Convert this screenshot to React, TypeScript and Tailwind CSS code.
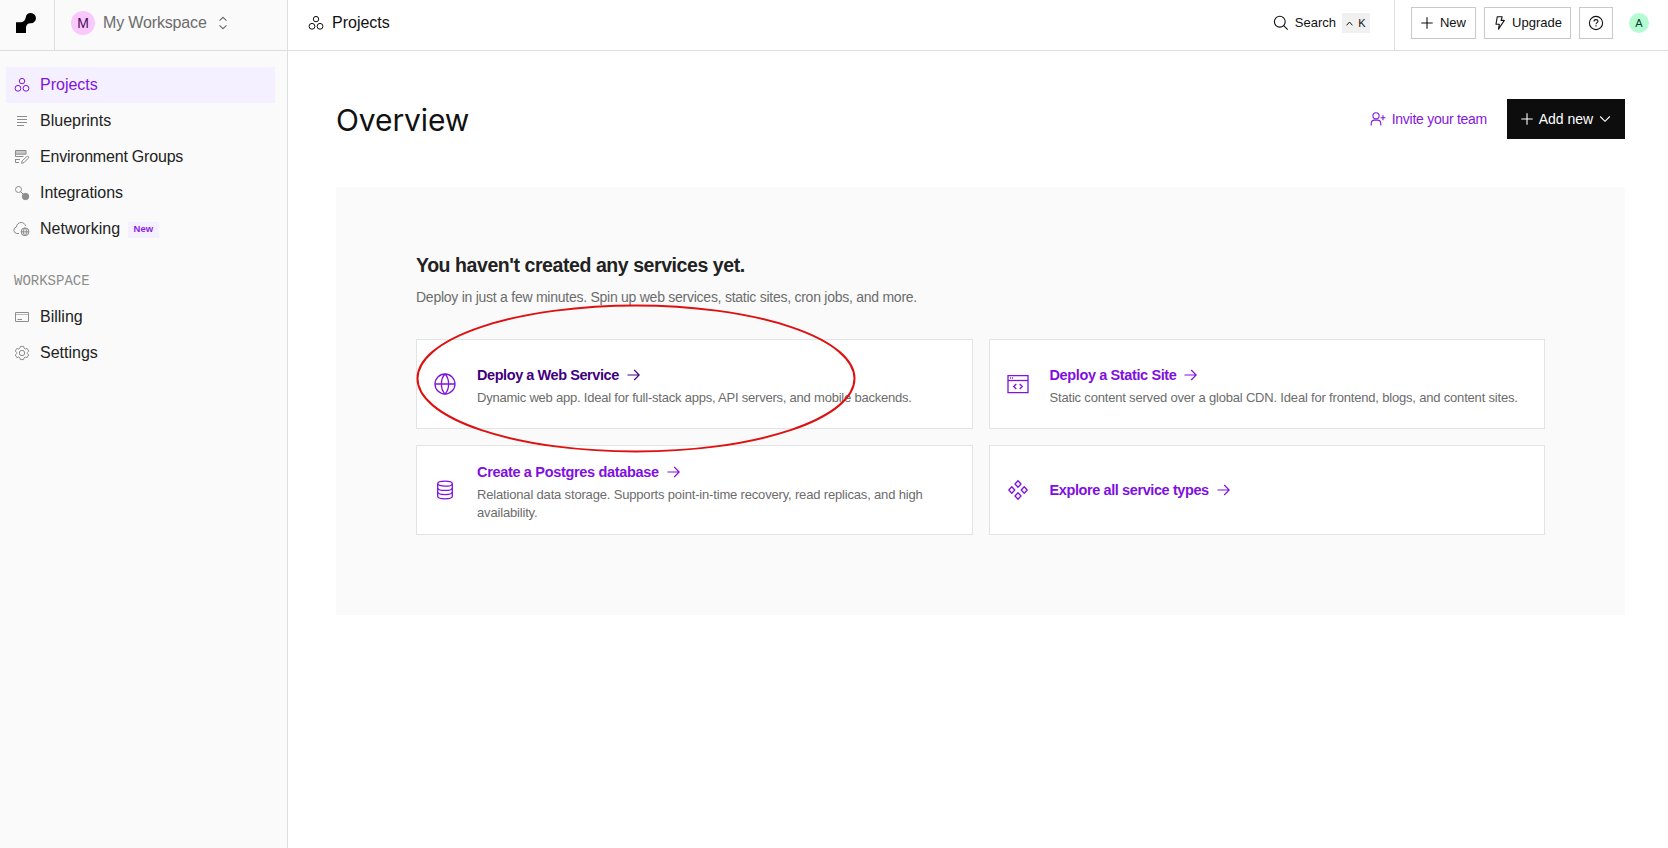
import React from "react";

type P = { className?: string };

const Rings = ({ className = "" }: P) => (
  <svg width="16" height="16" viewBox="0 0 16 16" fill="none" stroke="currentColor" strokeWidth="1" className={className}>
    <circle cx="8" cy="4.1" r="2.7" />
    <circle cx="4" cy="11.3" r="2.9" />
    <circle cx="12" cy="11.3" r="2.9" />
  </svg>
);

const Lines = () => (
  <svg width="16" height="16" viewBox="0 0 16 16" fill="none" stroke="currentColor" strokeWidth="1">
    <path d="M3 3.5h10M3 6.5h10M3 9.5h10M3 12.5h7" />
  </svg>
);

const EnvGroups = () => (
  <svg width="16" height="16" viewBox="0 0 16 16" fill="none" stroke="currentColor" strokeWidth="1">
    <path d="M1.5 1.5h10.5v3.700h-10.500z" fill="currentColor" fillOpacity="0.45" />
    <path d="M1.500 5v2.500h8M1 10.500h5M1.500 10.500v3h3.500" />
    <path d="M7.6 14.4l.6-2.6 4.6-4.3c1.1-.8 2.4.5 1.6 1.6L10 13.6z" />
  </svg>
);

const Integrations = () => (
  <svg width="16" height="16" viewBox="0 0 16 16" fill="none" stroke="currentColor" strokeWidth="1">
    <circle cx="4.5" cy="4.5" r="3" />
    <path d="M6.7 6.7l2.5 2.5" />
    <circle cx="11.5" cy="11.5" r="3.2" fill="currentColor" />
  </svg>
);

const CloudGlobe = () => (
  <svg width="17" height="16" viewBox="0 0 17 16" fill="none" stroke="currentColor" strokeWidth="1" className="-ml-px">
    <path d="M6 12.5H3.8A3.3 3.3 0 0 1 3.4 6C3.6 3.2 5.800 1.500 8.200 1.500c2.200 0 4 1.400 4.400 3.600" />
    <circle cx="12" cy="10.800" r="3.900" fill="currentColor" fillOpacity="0.15" />
    <path d="M8.100 10.800h7.800M12 6.900c-2.200 2.200-2.200 5.600 0 7.800M12 6.900c2.200 2.200 2.200 5.600 0 7.800" />
  </svg>
);

const Card = () => (
  <svg width="16" height="16" viewBox="0 0 16 16" fill="none" stroke="currentColor" strokeWidth="1">
    <path d="M1.500 3.500h13v9h-13z" />
    <path d="M2 5.500h12" strokeOpacity="0.6" />
    <path d="M3.500 10.500h4.500" />
  </svg>
);

const Gear = () => (
  <svg width="16" height="16" viewBox="0 0 16 16" fill="none" stroke="currentColor" strokeWidth="1" strokeLinejoin="round">
    <path d="M6.400 1.400h3.200l.5 1.800 1.200.7 1.800-.5 1.600 2.700-1.300 1.300v1.200l1.300 1.300-1.600 2.700-1.800-.5-1.200.7-.5 1.800H6.400l-.5-1.800-1.200-.7-1.800.5-1.600-2.700 1.300-1.300V7.400L1.300 6.100l1.600-2.700 1.800.5 1.200-.7z" />
    <circle cx="8" cy="8" r="2.700" />
  </svg>
);

const UpDown = () => (
  <svg width="10" height="14" viewBox="0 0 10 14" fill="none" stroke="currentColor" strokeWidth="1.100">
    <path d="M1.500 4.700L5 1.300l3.500 3.400M1.500 9.300L5 12.700l3.500-3.400" />
  </svg>
);

const Plus = () => (
  <svg width="12" height="12" viewBox="0 0 12 12" fill="none" stroke="currentColor" strokeWidth="1.100">
    <path d="M6 .3v11.400M.3 6h11.400" />
  </svg>
);

const Bolt = () => (
  <svg width="10" height="14" viewBox="0 0 10 14" fill="none" stroke="currentColor" strokeWidth="1.100" strokeLinejoin="round">
    <path d="M2.300.7h4.900L6.100 4.400h3.200L3.500 13.200l.9-5H1z" />
  </svg>
);

const Help = () => (
  <svg width="16" height="16" viewBox="0 0 16 16" fill="none" stroke="currentColor" strokeWidth="1.100">
    <circle cx="8" cy="8" r="6.600" />
    <path d="M6 6.500c0-1.200.9-1.900 2-1.900s2 .7 2 1.700c0 1.300-2 1.300-2 2.900M8 10.300v1.200" />
  </svg>
);

const Search = () => (
  <svg width="16" height="16" viewBox="0 0 16 16" fill="none" stroke="currentColor" strokeWidth="1.100">
    <circle cx="6.800" cy="6.700" r="5.400" />
    <path d="M10.700 10.700l4 4" />
  </svg>
);

const UserPlus = () => (
  <svg width="16" height="16" viewBox="0 0 16 16" fill="none" stroke="currentColor" strokeWidth="1.100">
    <circle cx="6" cy="4.800" r="3.100" />
    <path d="M1.200 14.500v-1.700c0-2.300 1.600-3.700 3.300-3.700h3c1.700 0 3.300 1.400 3.300 3.700v1.700" />
    <path d="M13 4.300v5M10.500 6.800h5" />
  </svg>
);

const Arrow = () => (
  <svg width="13" height="12" viewBox="0 0 13 12" fill="none" stroke="currentColor" strokeWidth="1.100" className="shrink-0">
    <path d="M.5 6h11.500M7.200 1l5 5-5 5" />
  </svg>
);

const Globe = () => (
  <svg width="24" height="24" viewBox="0 0 24 24" fill="none" stroke="currentColor" strokeWidth="1.300">
    <circle cx="12" cy="12" r="10" />
    <path d="M2 12h20M12 2C7.200 7 7.200 17 12 22M12 2c4.800 5 4.800 15 0 20" />
  </svg>
);

const Database = () => (
  <svg width="24" height="24" viewBox="0 0 24 24" fill="none" stroke="currentColor" strokeWidth="1.300">
    <ellipse cx="12" cy="5.700" rx="7.300" ry="2.500" />
    <path d="M4.700 5.700v12.600c0 1.400 3.300 2.500 7.300 2.500s7.300-1.100 7.300-2.500V5.700" />
    <path d="M4.700 9.900c0 1.400 3.300 2.500 7.300 2.500s7.300-1.100 7.300-2.500M4.700 14.100c0 1.400 3.300 2.500 7.300 2.500s7.300-1.100 7.300-2.500" />
  </svg>
);

const Browser = () => (
  <svg width="24" height="24" viewBox="0 0 24 24" fill="none" stroke="currentColor" strokeWidth="1.300">
    <path d="M2 3.600h20v17H2z" />
    <path d="M2 8.500h20" />
    <path d="M4.500 5v2M6.500 5v2" strokeWidth="1" strokeOpacity="0.7" />
    <path d="M10.300 12L7.700 14.500l2.600 2.500M13.700 12l2.600 2.500-2.600 2.500" />
  </svg>
);

const Diamonds = () => (
  <svg width="24" height="24" viewBox="0 0 24 24" fill="none" stroke="currentColor" strokeWidth="1.300" strokeLinejoin="round">
    <path d="M12 2.800l3 3.200-3 3.200L9 6zM12 14.800l3 3.200-3 3.200L9 18zM5.800 8.800l3 3.200-3 3.200-3-3.200zM18.200 8.800l3 3.200-3 3.200-3-3.200z" />
  </svg>
);

function NavItem({ icon, label, active = false, badge, tracking = "tracking-normal" }: { icon: React.ReactNode; label: string; active?: boolean; badge?: string; tracking?: string }) {
  return (
    <a className={`flex h-9 items-center pl-2 ${active ? "bg-[#f4f0ff] text-[#7f14dc]" : "text-[#222]"}`}>
      <span className={`flex w-[26px] ${active ? "text-[#7f14dc]" : "text-[#8c8c8c]"}`}>{icon}</span>
      <span className={`text-base leading-5 ${tracking}`}>{label}</span>
      {badge && (
        <span className="ml-2 mt-px flex h-4 items-center bg-[#f4f0ff] px-[5.5px] text-[9.5px] font-bold text-[#8a1fe0]">{badge}</span>
      )}
    </a>
  );
}

function ServiceCard({ icon, title, text, visited = false, titleTracking = "tracking-[-0.38px]", textTracking = "tracking-[-0.22px]" }: { icon: React.ReactNode; title: string; text?: string; visited?: boolean; titleTracking?: string; textTracking?: string }) {
  return (
    <a className="flex h-[90px] items-center border border-[#e3e3e3] bg-white pl-4 pr-4">
      <span className="flex w-11 shrink-0 text-[#7f14dc]">{icon}</span>
      <span className={`flex flex-col ${text ? "pt-1" : ""}`}>
        <span className={`flex items-center gap-2 text-[14.5px] font-bold leading-5 ${titleTracking} ${visited ? "text-[#41007f]" : "text-[#7f0fe0]"}`}>
          {title}
          <Arrow />
        </span>
        {text && <span className={`mt-[4px] text-[13px] leading-[18px] text-[#6c6c6c] ${textTracking}`}>{text}</span>}
      </span>
    </a>
  );
}

export default function App() {
  return (
    <div className="flex h-[848px] w-[1668px] overflow-hidden bg-white font-['Liberation_Sans',Arial,sans-serif] text-[#111]">
      <aside className="flex w-[288px] shrink-0 flex-col border-r border-[#dedede] bg-[#fafafa]">
        <div className="flex h-[51px] shrink-0 border-b border-[#dedede]">
          <div className="flex w-[55px] shrink-0 border-r border-[#dedede] pl-4 pt-[13px]">
            <svg width="20" height="20" viewBox="0 0 20 20" fill="#000">
              <path d="M14.800 0a5.100 5.100 0 0 0-5 4.200C9.200 7.500 7.300 9.300 4.500 9.300H0V20h10v-5.200c0-2.600 1.700-4.500 4.300-4.500h.5a5.150 5.150 0 0 0 0-10.300z" />
            </svg>
          </div>
          <div className="flex h-[46px] items-center pl-4 text-[#6c6c6c]">
            <span className="flex size-6 items-center justify-center rounded-full bg-[#f9c8fc] text-sm text-[#4c0a5c]">M</span>
            <span className="ml-2 pb-[1px] text-base tracking-[-0.15px]">My Workspace</span>
            <span className="ml-[11px]"><UpDown /></span>
          </div>
        </div>
        <nav className="ml-1.5 mr-3 mt-4 flex flex-col">
          <NavItem icon={<Rings />} label="Projects" active />
          <NavItem icon={<Lines />} label="Blueprints" />
          <NavItem icon={<EnvGroups />} label="Environment Groups" tracking="tracking-[-0.2px]" />
          <NavItem icon={<Integrations />} label="Integrations" tracking="tracking-[-0.05px]" />
          <NavItem icon={<CloudGlobe />} label="Networking" badge="New" />
          <div className="mb-2 mt-6 pl-2 font-['Liberation_Mono',monospace] text-sm leading-5 text-[#8c8c8c]">WORKSPACE</div>
          <NavItem icon={<Card />} label="Billing" />
          <NavItem icon={<Gear />} label="Settings" />
        </nav>
      </aside>

      <div className="flex min-w-0 grow flex-col">
        <header className="flex h-[51px] shrink-0 border-b border-[#dedede]">
          <div className="flex h-[46px] grow items-center pl-5">
            <Rings />
            <span className="ml-2 pb-[1px] text-base">Projects</span>
          </div>
          <div className="flex h-[46px] items-center pr-6 text-[13px]">
            <Search />
            <span className="ml-[6px]">Search</span>
            <span className="ml-[6px] flex h-5 w-7 items-center justify-center gap-[5px] bg-[#f0f0f0] text-[11px]">
              <svg width="7" height="5" viewBox="0 0 7 5" fill="none" stroke="currentColor"><path d="M.6 4.300L3.500 1l2.900 3.300" /></svg>
              K
            </span>
          </div>
          <div className="flex items-start border-l border-[#dedede] pl-4 pr-[19px] pt-[7px] text-[13px]">
            <button className="flex h-8 w-[65px] items-center justify-center gap-[7px] border border-[#c9c9c9]"><Plus />New</button>
            <button className="ml-2 flex h-8 w-[87px] items-center justify-center gap-[7px] border border-[#c9c9c9] pl-[2px]"><Bolt />Upgrade</button>
            <button className="ml-2 flex h-8 w-[34px] items-center justify-center border border-[#c9c9c9]"><Help /></button>
            <span className="ml-4 mt-[6px] flex size-5 items-center justify-center rounded-full bg-[#b4fbd4] text-[11px] text-[#053d24]">A</span>
          </div>
        </header>

        <main className="flex flex-col pl-12 pr-[43px] pt-12">
          <div className="flex h-10 items-center justify-between">
            <h1 className="pt-[2px] font-['Inter',sans-serif] text-[30px] leading-10 tracking-[-0.1px]">Overview</h1>
            <div className="flex items-center text-sm">
              <a className="flex items-center gap-[6px] text-[#8317dc] tracking-[-0.27px]"><UserPlus />Invite your team</a>
              <button className="ml-5 flex h-10 w-[118px] items-center justify-center gap-[6px] bg-[#0d0d0d] text-white">
                <Plus />
                <span>Add new</span>
                <svg width="12" height="12" viewBox="0 0 12 12" fill="none" stroke="currentColor" strokeWidth="1.100"><path d="M1.200 3.500L6 8.300l4.800-4.800" /></svg>
              </button>
            </div>
          </div>

          <section className="relative mt-12 flex h-[428px] flex-col bg-[#fafafa] px-20 pt-[66px]">
            <h2 className="text-[19.5px] font-bold leading-6 tracking-[-0.43px] text-[#222]">You haven't created any services yet.</h2>
            <p className="mt-2.5 text-sm leading-5 tracking-[-0.255px] text-[#6c6c6c]">Deploy in just a few minutes. Spin up web services, static sites, cron jobs, and more.</p>
            <div className="mt-8 grid grid-cols-2 gap-4">
              <ServiceCard icon={<Globe />} title="Deploy a Web Service" titleTracking="tracking-[-0.43px]" text="Dynamic web app. Ideal for full-stack apps, API servers, and mobile backends." visited />
              <ServiceCard icon={<Browser />} title="Deploy a Static Site" text="Static content served over a global CDN. Ideal for frontend, blogs, and content sites." textTracking="tracking-[-0.185px]" />
              <ServiceCard icon={<Database />} title="Create a Postgres database" titleTracking="tracking-[-0.33px]" text="Relational data storage. Supports point-in-time recovery, read replicas, and high availability." textTracking="tracking-[-0.17px]" />
              <ServiceCard icon={<Diamonds />} title="Explore all service types" titleTracking="tracking-[-0.4px]" />
            </div>
            <svg className="pointer-events-none absolute left-20 top-[117px]" width="440" height="149" viewBox="0 0 440 149" fill="none" stroke="#de1010" strokeWidth="2">
              <ellipse cx="220" cy="74.500" rx="218.500" ry="73" />
            </svg>
          </section>
        </main>
      </div>
    </div>
  );
}
